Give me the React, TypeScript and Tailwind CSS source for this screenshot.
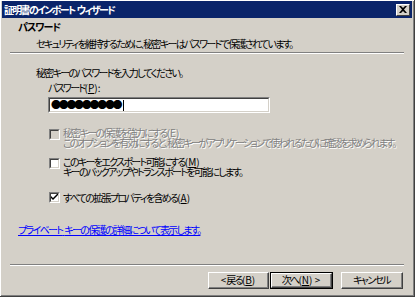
import React from "react";

const font = {
  fontFamily: '"Noto Sans CJK JP", "Liberation Sans", sans-serif',
  fontFeatureSettings: '"palt"',
};

// latin part of a label, kept at normal letter spacing
const L = ({ children }: { children: React.ReactNode }) => (
  <span className="tracking-normal">{children}</span>
);

const Sunken = ({ className, children }: { className?: string; children?: React.ReactNode }) => (
  <div className={`border-t border-l border-t-[#808080] border-l-[#808080] border-r border-b border-r-white border-b-white ${className ?? ""}`}>
    <div className="h-full w-full border-t border-l border-t-[#404040] border-l-[#404040] border-r border-b border-r-[#d4d0c8] border-b-[#d4d0c8]">
      {children}
    </div>
  </div>
);

const CheckBox = ({ checked, disabled }: { checked?: boolean; disabled?: boolean }) => (
  <Sunken className="w-[11px] h-[11px] shrink-0">
    <div className={`h-full w-full flex items-center justify-center ${disabled ? "bg-[#d4d0c8]" : "bg-white"}`}>
      {checked && (
        <svg width="7" height="7" viewBox="0 0 7 7">
          <path d="M0 2 L0 4 L2 6 L7 1 L7 -1 L2 4 Z" fill="#000" />
        </svg>
      )}
    </div>
  </Sunken>
);

const Button = ({ children, isDefault, w }: { children: React.ReactNode; isDefault?: boolean; w: string }) => (
  <div className={`h-[17px] ${w} ${isDefault ? "border border-black" : ""}`}>
    <div className="h-full w-full border-t border-l border-t-white border-l-white border-r border-b border-r-[#404040] border-b-[#404040]">
      <div className="h-full w-full border-r border-b border-r-[#808080] border-b-[#808080] flex items-center justify-center text-black whitespace-nowrap">
        {children}
      </div>
    </div>
  </div>
);

export default function App() {
  return (
    <div style={font} className="w-[415px] h-[297px] bg-[#404040] text-[10px] leading-[10px] tracking-[-1.7px] select-none">
      <div className="w-[414px] h-[296px] border-t border-l border-t-white border-l-white">
        <div className="w-full h-full border-r border-b border-r-[#808080] border-b-[#808080] bg-[#d4d0c8] flex flex-col">
          {/* title bar */}
          <div className="h-[17px] mx-[1px] bg-[#0a246a] flex items-center justify-between pl-[2px] pr-[2px]">
            <span className="text-white font-bold whitespace-nowrap">
              証明書のインポート<L> </L>ウィザード
            </span>
            <div className="w-[14px] h-[12px] bg-[#d4d0c8] border-t border-l border-t-white border-l-white border-r border-b border-r-[#404040] border-b-[#404040] flex items-center justify-center">
              <svg width="8" height="7" viewBox="0 0 8 7">
                <path d="M0 0h2l2 2l2-2h2l-3 3.5l3 3.5h-2l-2-2l-2 2h-2l3-3.5z" fill="#000" />
              </svg>
            </div>
          </div>

          {/* header */}
          <div className="pl-[17px] pt-[4px] whitespace-nowrap">
            <div className="font-bold tracking-[-1px]">パスワード</div>
            <div className="pl-[18px] mt-[7px]">セキュリティを維持するために、秘密キーはパスワードで保護されています。</div>
          </div>
          <div className="mx-[9px] mt-[3px] h-[2px] border-t border-t-[#808080] border-b border-b-white" />

          {/* body */}
          <div className="pl-[35px] pt-[14px] flex flex-col whitespace-nowrap">
            <div>秘密キーのパスワードを入力してください。</div>
            <div className="pl-[12px] mt-[5px] flex flex-col">
              <div>
                パスワード<L>(<span className="underline">P</span>):</L>
              </div>
              <Sunken className="mt-[4px] w-[222px] h-[16px]">
                <div className="h-full bg-white flex items-center pl-[1px]">
                  <span className="tracking-[-2.3px] leading-none">●●●●●●●●●</span>
                  <span className="ml-[3px] w-[1px] h-[11px] bg-black" />
                </div>
              </Sunken>
            </div>

            <div className="pl-[13px] flex flex-col">
              <div className="mt-[15px] flex gap-[3px]">
                <div className="pt-[1px]">
                  <CheckBox disabled />
                </div>
                <div className="text-[#808080] flex flex-col [text-shadow:1px_1px_0_#fff]">
                  <div>
                    秘密キーの保護を強力にする<L>(E)</L>
                  </div>
                  <div className="tracking-[-1.9px]">このオプションを有効にすると、秘密キーがアプリケーションで使われるたびに確認を求められます。</div>
                </div>
              </div>
              <div className="mt-[9px] flex gap-[3px]">
                <div className="pt-[1px]">
                  <CheckBox />
                </div>
                <div className="flex flex-col">
                  <div>
                    このキーをエクスポート可能にする<L>(<span className="underline">M</span>)</L>
                  </div>
                  <div>キーのバックアップやトランスポートを可能にします。</div>
                </div>
              </div>
              <div className="mt-[15px] flex gap-[3px] items-center">
                <CheckBox checked />
                <div>
                  すべての拡張プロパティを含める<L>(<span className="underline">A</span>)</L>
                </div>
              </div>
            </div>
          </div>

          <div className="pl-[17px] mt-[22px] whitespace-nowrap">
            <span className="text-[#0000ff] underline">
              プライベート<L> </L>キーの保護の詳細について表示します。
            </span>
          </div>

          <div className="flex-1" />
          <div className="mx-[9px] h-[2px] border-t border-t-[#808080] border-b border-b-white" />
          <div className="flex justify-end pr-[10px] pt-[6px] pb-[6px]">
            <Button w="w-[61px]">
              <L>&lt; </L>戻る<L>(<span className="underline">B</span>)</L>
            </Button>
            <div className="ml-[1px]">
              <Button isDefault w="w-[63px]">
                次へ<L>(<span className="underline">N</span>) &gt;</L>
              </Button>
            </div>
            <div className="ml-[8px]">
              <Button w="w-[62px]">キャンセル</Button>
            </div>
          </div>
        </div>
      </div>
    </div>
  );
}
